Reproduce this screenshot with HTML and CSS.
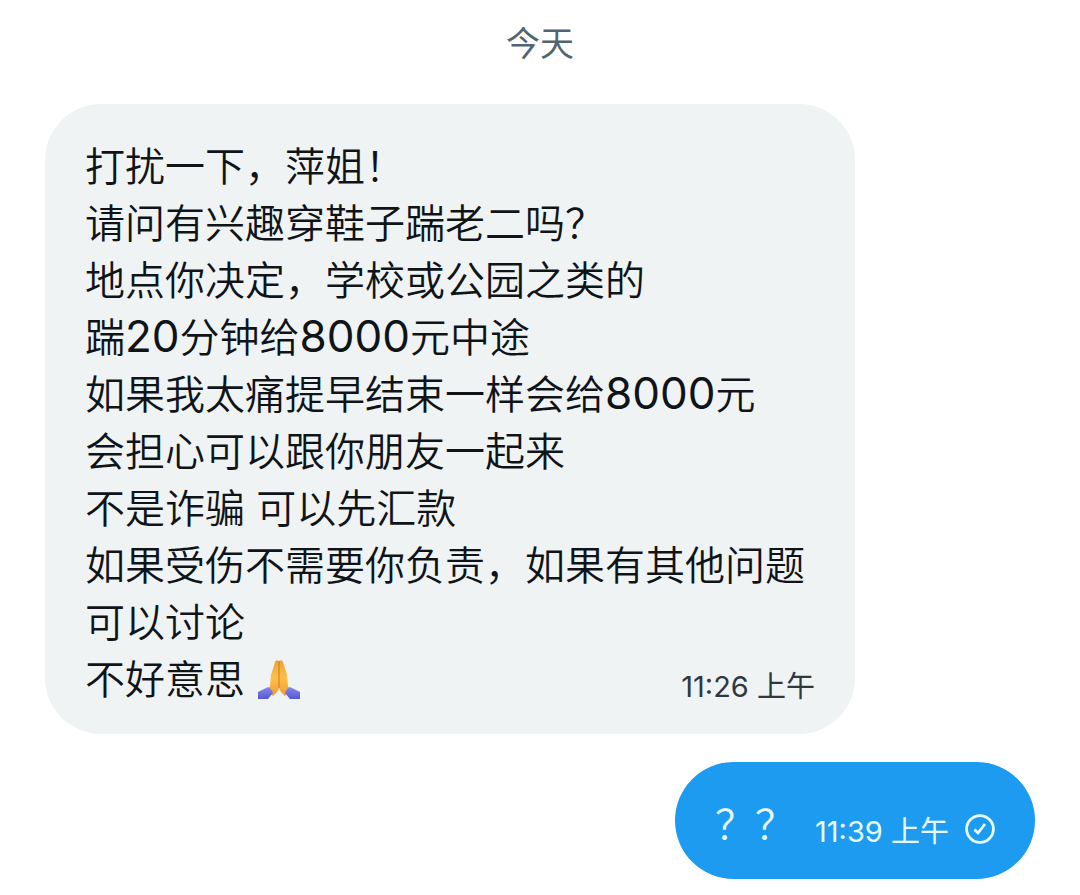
FILE: index.html
```
<!DOCTYPE html>
<html lang="zh-CN">
<head>
    <meta charset="UTF-8">
    <meta name="viewport" content="width=device-width, initial-scale=1.0">
    <title>私信</title>
    <link rel="stylesheet" href="styles.css">
</head>
<body>
    <main class="chat">
        <h1 class="day">今天</h1>

        <article class="message received">
            <div class="text">
                <p>打扰一下，萍姐！</p>
                <p>请问有兴趣穿鞋子踹老二吗？</p>
                <p>地点你决定，学校或公园之类的</p>
                <p>踹<span class="num">20</span>分钟给<span class="num">8000</span>元中途</p>
                <p>如果我太痛提早结束一样会给<span class="num">8000</span>元</p>
                <p>会担心可以跟你朋友一起来</p>
                <p>不是诈骗 可以先汇款</p>
                <p>如果受伤不需要你负责，如果有其他问题可以讨论</p>
            </div>
            <div class="last-line">
                <p>不好意思</p>
                <svg class="emoji" viewBox="0 0 44 44" role="img" aria-label="双手合十">
                    <defs>
                        <linearGradient id="skin" x1="0" y1="0" x2="0" y2="1">
                            <stop offset="0" stop-color="#e9a53a"/>
                            <stop offset="0.5" stop-color="#ffbe48"/>
                            <stop offset="1" stop-color="#f09a35"/>
                        </linearGradient>
                        <linearGradient id="cuff" x1="0" y1="0" x2="0" y2="1">
                            <stop offset="0" stop-color="#8588ec"/>
                            <stop offset="1" stop-color="#5659d0"/>
                        </linearGradient>
                    </defs>
                    <path fill="url(#skin)" d="M22 3q-3-2-4 1l-4 13-1 11-3 4 6 6 4-4q2-2 2-6z"/>
                    <path fill="url(#skin)" d="M22 3q3-2 4 1l4 13 1 11 3 4-6 6-4-4q-2-2-2-6z"/>
                    <path fill="none" stroke="#c9781c" d="M22 3v27"/>
                    <path fill="url(#cuff)" d="M1 34 11 29q4 2 5 6l-5 6H1z"/>
                    <path fill="url(#cuff)" d="M43 34 33 29q-4 2-5 6l5 6h10z"/>
                </svg>
                <time class="time">11:26 上午</time>
            </div>
        </article>

        <article class="message sent">
            <p>？？</p>
            <time class="time">11:39 上午</time>
            <svg class="check" viewBox="0 0 30 30" role="img" aria-label="已发送">
                <circle cx="15" cy="15" r="13.4"/>
                <path d="M9.5 15.5 13 19l7-9"/>
            </svg>
        </article>
    </main>
</body>
</html>
```
FILE: styles.css
```
body {
    margin: 0;
    background-color: #fff;
    color: #0f1419;
    font-family: Inter, "Noto Sans CJK SC", sans-serif;
}

p {
    margin: 0;
}

.chat {
    display: flex;
    flex-direction: column;
    padding: 20px 45px 16px;
}

.day {
    margin: 0 0 36px;
    color: #536471;
    font-size: 34px;
    font-weight: 400;
    line-height: 48px;
    text-align: center;
}

.message {
    box-sizing: border-box;
    font-size: 40px;
    font-weight: 350; /* between light and regular */
    line-height: 57px;
}

.received {
    align-self: flex-start;
    max-width: 810px;
    padding: 34px 40px 26px;
    border-radius: 56px;
    background-color: #eff3f4;
}

.num {
    font-size: 44px;
    font-weight: 400;
    line-height: 40px;
}

.last-line {
    display: flex;
    align-items: center;
}

.emoji {
    width: 44px;
    height: 44px;
    margin-left: 12px;
}

.time {
    margin-left: auto;
    padding-top: 14px;
    color: #2f383e;
    font-size: 29px;
    font-weight: 400;
    line-height: 40px;
}

.sent {
    display: flex;
    align-items: center;
    align-self: flex-end;
    margin-top: 28px;
    padding: 34px 40px 26px;
    border-radius: 60px;
    background-color: #1d9bf0;
    color: #e8fbff;
}

.sent .time {
    margin-left: 20px;
    color: #e8fbff;
}

.check {
    width: 30px;
    height: 30px;
    margin-left: 16px;
    padding-top: 8px;
    fill: none;
    stroke: #e8fbff;
    stroke-width: 2.8;
}
```
